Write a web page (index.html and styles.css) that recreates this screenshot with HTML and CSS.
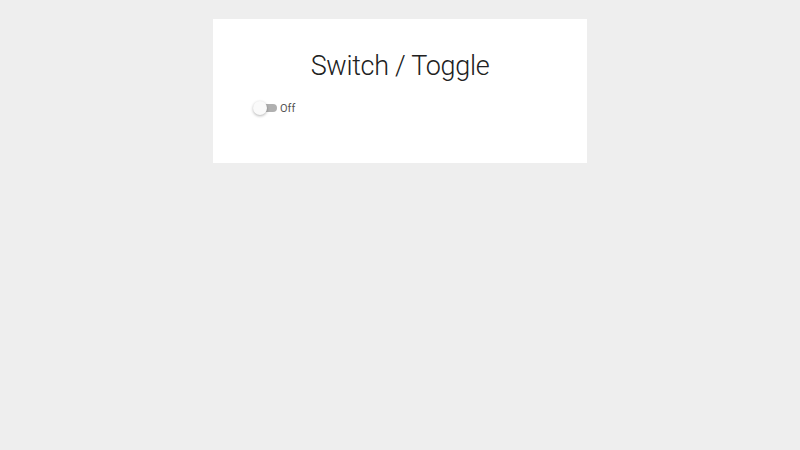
FILE: index.html
```html
<!DOCTYPE html>
<html lang="en">

<head>
    <meta charset="UTF-8">
    <meta name="viewport" content="width=device-width, initial-scale=1.0">
    <title>Switch / Toggle</title>
    <link rel="stylesheet" href="styles.css">
</head>

<body>
    <div class="card">
        <h1>Switch / Toggle</h1>

        <!-- Switch -->
        <label class="switch">
            <input type="checkbox" id="toggle">
            <span class="track"><span class="knob"></span></span>
            <span class="switch-label" id="toggleLabel">Off</span>
        </label>
    </div>

    <script>
        const toggle = document.getElementById('toggle');
        toggle.addEventListener('change', () => {
            document.getElementById('toggleLabel').textContent = toggle.checked ? 'On' : 'Off';
        });
    </script>
</body>

</html>
```

FILE: styles.css
```css
body {
    margin: 0;
    background-color: #eeeeee;
    font-family: Roboto, "Noto Sans", sans-serif;
}

.card {
    width: 374px;
    height: 144px;
    box-sizing: border-box;
    margin: 19px auto 0;
    padding: 28px 40px 0;
    background-color: #fff;
}

h1 {
    margin: 0 0 12px;
    font-size: 27px;
    font-weight: 300;
    line-height: 38px;
    letter-spacing: -0.3px;
    text-align: center;
    color: #212121;
}

.switch {
    display: inline-flex;
    align-items: center;
    gap: 3px;
    cursor: pointer;
}

.switch input {
    display: none;
}

.track {
    position: relative;
    width: 21px;
    height: 8px;
    margin-left: 3px;
    border-radius: 4px;
    background-color: #b0b0b0;
    transition: background-color 0.2s;
}

.knob {
    position: absolute;
    left: -3px;
    top: -3px;
    width: 14px;
    height: 14px;
    border-radius: 50%;
    background-color: #fafafa;
    box-shadow: 0 1px 3px rgba(0, 0, 0, 0.3);
    transition: left 0.2s;
}

.switch input:checked + .track {
    background-color: #80cbc4;
}

.switch input:checked + .track .knob {
    left: 10px;
    background-color: #009688;
}

.switch-label {
    font-size: 11px;
    color: #555;
}
```
